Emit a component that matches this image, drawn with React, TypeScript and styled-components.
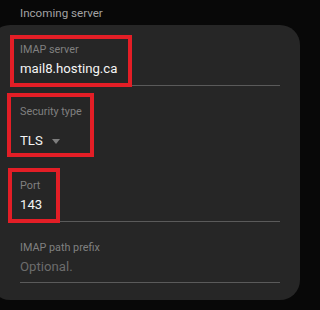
import React from "react";
import styled, { createGlobalStyle } from "styled-components";

const Global = createGlobalStyle`
  html, body {
    margin: 0;
    padding: 0;
    background: #080808;
    font-family: Roboto, "Noto Sans", sans-serif;
    overflow: hidden;
  }
`;

const Page = styled.div`
  width: 300px;
  height: 310px;
  background: #080808;
  overflow: hidden;
`;

const SectionTitle = styled.div`
  padding-left: 20px;
  font-size: 11.6px;
  line-height: 14px;
  padding-top: 6px;
  height: 19px;
  color: #a3a3a3;
`;

const Card = styled.div`
  margin-left: -10px;
  width: 310px;
  box-sizing: border-box;
  padding: 0 20px 17px 30px;
  background: #262626;
  border-radius: 20px;
`;

const Field = styled.div<{ $top: number; $bottom: number; $divider?: boolean }>`
  position: relative;
  display: flex;
  flex-direction: column;
  gap: 3px;
  padding-top: ${(p) => p.$top}px;
  padding-bottom: ${(p) => p.$bottom}px;
  border-bottom: ${(p) => (p.$divider ? "1px solid #5a5a5a" : "none")};
`;

const Label = styled.div`
  font-size: 10.8px;
  line-height: 14px;
  color: #808080;
`;

const Value = styled.div<{ $placeholder?: boolean }>`
  font-size: 13.2px;
  line-height: 18px;
  color: ${(p) => (p.$placeholder ? "#6c6c6c" : "#f4f4f4")};
`;

const SpinnerRow = styled.div`
  display: flex;
  align-items: center;
  gap: 9px;
  margin-top: 10px;
`;

const Caret = styled.span`
  width: 0;
  height: 0;
  border-left: 4px solid transparent;
  border-right: 4px solid transparent;
  border-top: 5px solid #7e7e7e;
  margin-top: 1px;
`;

const Highlight = styled.div<{ $x: number; $y: number; $w: number; $h: number }>`
  position: absolute;
  left: ${(p) => p.$x}px;
  top: ${(p) => p.$y}px;
  width: ${(p) => p.$w}px;
  height: ${(p) => p.$h}px;
  box-sizing: border-box;
  border: 4.5px solid #e31e26;
  pointer-events: none;
`;

export default function App() {
  return (
    <>
      <Global />
      <Page>
        <SectionTitle>Incoming server</SectionTitle>
        <Card>
          <Field $top={18} $bottom={7} $divider>
            <Label>IMAP server</Label>
            <Value>mail8.hosting.ca</Value>
            <Highlight $x={-10} $y={10} $w={121.5} $h={52} />
          </Field>
          <Field $top={19} $bottom={0}>
            <Label>Security type</Label>
            <SpinnerRow>
              <Value>TLS</Value>
              <Caret />
            </SpinnerRow>
            <Highlight $x={-13} $y={7} $w={87} $h={64} />
          </Field>
          <Field $top={29} $bottom={7} $divider>
            <Label>Port</Label>
            <Value>143</Value>
            <Highlight $x={-12} $y={18} $w={52} $h={55} />
          </Field>
          <Field $top={19} $bottom={6} $divider>
            <Label>IMAP path prefix</Label>
            <Value $placeholder>Optional.</Value>
          </Field>
        </Card>
      </Page>
    </>
  );
}
